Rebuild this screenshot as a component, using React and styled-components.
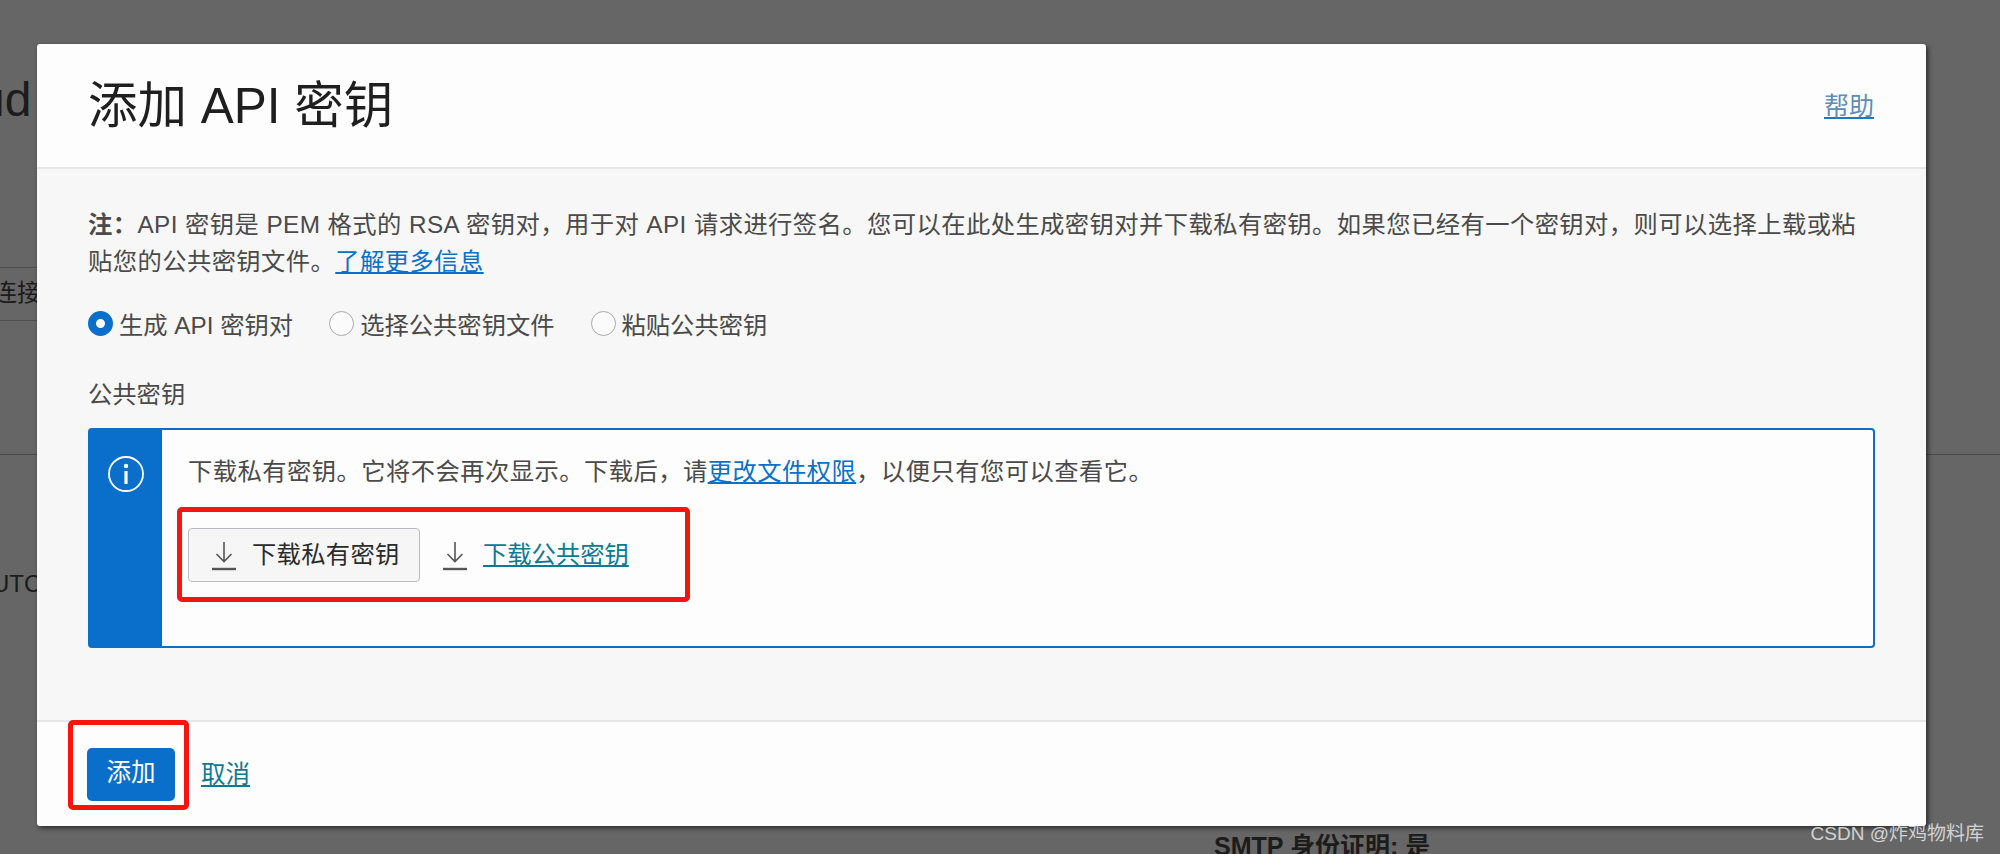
import React from 'react';
import styled, { createGlobalStyle } from 'styled-components';

const GlobalStyle = createGlobalStyle`
  html, body {
    margin: 0;
    padding: 0;
    height: 854px;
    overflow: hidden;
    background: #666666;
  }
  body {
    font-family: "Liberation Sans", "Noto Sans CJK SC", sans-serif;
  }
`;

const Page = styled.div`
  position: relative;
  width: 2000px;
  height: 854px;
  overflow: hidden;
  background: #666666;
  color: #1c1c1c;
`;

const Backdrop = styled.div`
  padding-top: 76px;
`;

const PageTitle = styled.div`
  font-size: 48px;
  line-height: 48px;
  height: 191px;
  margin-left: -22px;
`;

const ConnectRow = styled.div`
  height: 52px;
  border-top: 1px solid #4e4e4e;
  border-bottom: 1px solid #4e4e4e;
  font-size: 24px;
  line-height: 50px;
  width: 60px;
  text-indent: -7px;
  white-space: nowrap;
`;

const SectionRule = styled.div`
  height: 111px;
  margin-top: 133px;
  border-top: 1px solid #4a4a4a;
`;

const ZoneText = styled.div`
  font-size: 24px;
  line-height: 28px;
  margin-top: 4px;
  text-indent: -8px;
`;

const SmtpText = styled.div`
  font-size: 25px;
  line-height: 28px;
  font-weight: 700;
  margin-left: 1214px;
  margin-top: 234px;
  white-space: nowrap;
`;

const Dialog = styled.div`
  position: absolute;
  left: 37px;
  top: 44px;
  width: 1889px;
  height: 782px;
  display: flex;
  flex-direction: column;
  background: #fdfdfd;
  border-radius: 3px;
  box-shadow: 2px 2px 5px rgba(0, 0, 0, 0.6);
`;

const Header = styled.header`
  height: 125px;
  flex-shrink: 0;
  box-sizing: border-box;
  padding: 0 52px 0 51px;
  display: flex;
  align-items: center;
  justify-content: space-between;
  border-bottom: 2px solid #e6e6e6;
`;

const Title = styled.h1`
  margin: 0;
  font-size: 49.5px;
  font-weight: 400;
  color: #1f1f1f;
  line-height: 56px;
`;

const HelpLink = styled.a`
  margin-bottom: 3px;
  font-size: 25px;
  color: #5f8db5;
  text-decoration: underline;
  text-decoration-color: #1f78bd;
`;

const Body = styled.div`
  flex: 1;
  box-sizing: border-box;
  padding: 37px 51px 0;
  background: #f7f7f7;
  color: #4a4a4a;
  font-size: 24.3px;
`;

const Note = styled.p`
  margin: 0;
  max-width: 1785px;
  line-height: 37px;
  letter-spacing: 0.43px;
`;

const InlineLink = styled.a`
  color: #0a70c8;
  text-decoration: underline;
`;

const RadioRow = styled.div`
  display: flex;
  align-items: center;
  gap: 36px;
  margin-top: 25px;
  height: 36px;
`;

const RadioLabel = styled.label`
  display: flex;
  align-items: center;
  gap: 6px;
`;

const RadioDot = styled.span`
  box-sizing: border-box;
  width: 25px;
  height: 25px;
  border-radius: 50%;
  background: ${({ $checked }) => ($checked ? '#fff' : '#fbfbfb')};
  border: ${({ $checked }) => ($checked ? '8px solid #0a6fcb' : '1.5px solid #a9a9a9')};
`;

const FieldLabel = styled.div`
  margin-top: 36px;
  line-height: 36px;
`;

const InfoBox = styled.div`
  display: flex;
  box-sizing: border-box;
  margin-top: 15px;
  height: 220px;
  background: #fdfdfd;
  border: 2px solid #0a6fcb;
  border-radius: 4px;
`;

const InfoStripe = styled.div`
  width: 72px;
  flex-shrink: 0;
  display: flex;
  justify-content: center;
  padding-top: 25px;
  background: #0a6fcb;
  color: #fff;
`;

const InfoContent = styled.div`
  padding: 24px 0 0 26px;
`;

const InfoText = styled.div`
  line-height: 36px;
  letter-spacing: 0.45px;
`;

const Actions = styled.div`
  position: relative;
  display: flex;
  align-items: center;
  gap: 22px;
  margin-top: 38px;
  height: 54px;
`;

const Annotation = styled.span`
  position: absolute;
  box-sizing: border-box;
  border: 5px solid #f5150c;
  border-radius: 5px;
  pointer-events: none;
`;

const ActionsMark = styled(Annotation)`
  left: -11px;
  top: -21px;
  width: 513px;
  height: 95px;
`;

const GhostButton = styled.button`
  box-sizing: border-box;
  display: flex;
  align-items: center;
  gap: 15px;
  width: 232px;
  height: 54px;
  padding: 0 0 0 22px;
  font: inherit;
  letter-spacing: 0.3px;
  color: #2b2b2b;
  background: #f6f6f7;
  border: 1.5px solid #b9bcc2;
  border-radius: 4px;
`;

const ActionLabel = styled.span`
  margin-bottom: 6px;
`;

const LinkAction = styled.span`
  display: flex;
  align-items: center;
  gap: 15px;
`;

const TealLink = styled.a`
  color: #0b7a94;
  text-decoration: underline;
`;

const CancelLink = styled(TealLink)`
  margin-bottom: 3px;
`;

const Footer = styled.footer`
  position: relative;
  height: 106px;
  flex-shrink: 0;
  box-sizing: border-box;
  padding: 0 0 0 50px;
  display: flex;
  align-items: center;
  gap: 26px;
  border-top: 2px solid #e6e6e6;
  font-size: 24.5px;
`;

const PrimaryButton = styled.button`
  position: relative;
  width: 88px;
  height: 53px;
  margin-top: 1px;
  padding: 0 0 8px;
  font: inherit;
  color: #fff;
  background: #0a6fcb;
  border: 0;
  border-radius: 5px;
`;

const AddMark = styled(Annotation)`
  left: -19px;
  top: -28px;
  width: 121px;
  height: 90px;
`;

const Watermark = styled.div`
  position: absolute;
  right: 16px;
  bottom: 9px;
  font-size: 19px;
  color: rgba(255, 255, 255, 0.72);
  white-space: nowrap;
`;

const InfoIcon = () => (
  <svg width="38" height="38" viewBox="0 0 38 38" fill="none" stroke="currentColor">
    <circle cx="19" cy="19" r="17" strokeWidth="1.8" />
    <circle cx="19" cy="11" r="2.2" fill="currentColor" stroke="none" />
    <path d="M19 16v13" strokeWidth="3.2" />
  </svg>
);

const DownloadIcon = () => (
  <svg width="26" height="32" viewBox="0 0 26 32" fill="none" stroke="#555555" strokeWidth="1.6">
    <path d="M13 3v19M5.500 15l7.500 7.500 7.500-7.500" />
    <path d="M1 30h24" strokeWidth="2.4" />
  </svg>
);

export default function App() {
  return (
    <>
      <GlobalStyle />
      <Page>
        <Backdrop>
          <PageTitle>ud</PageTitle>
          <ConnectRow>连接</ConnectRow>
          <SectionRule />
          <ZoneText>UTC</ZoneText>
          <SmtpText>SMTP 身份证明: 是</SmtpText>
        </Backdrop>

        <Dialog>
          <Header>
            <Title>添加 API 密钥</Title>
            <HelpLink>帮助</HelpLink>
          </Header>
          <Body>
            <Note>
              <strong>注：</strong>API 密钥是 PEM 格式的 RSA 密钥对，用于对 API 请求进行签名。您可以在此处生成密钥对并下载私有密钥。如果您已经有一个密钥对，则可以选择上载或粘贴您的公共密钥文件。
              <InlineLink>了解更多信息</InlineLink>
            </Note>
            <RadioRow>
              <RadioLabel><RadioDot $checked />生成 API 密钥对</RadioLabel>
              <RadioLabel><RadioDot />选择公共密钥文件</RadioLabel>
              <RadioLabel><RadioDot />粘贴公共密钥</RadioLabel>
            </RadioRow>
            <FieldLabel>公共密钥</FieldLabel>
            <InfoBox>
              <InfoStripe><InfoIcon /></InfoStripe>
              <InfoContent>
                <InfoText>
                  下载私有密钥。它将不会再次显示。下载后，请<InlineLink>更改文件权限</InlineLink>，以便只有您可以查看它。
                </InfoText>
                <Actions>
                  <ActionsMark />
                  <GhostButton><DownloadIcon /><ActionLabel>下载私有密钥</ActionLabel></GhostButton>
                  <LinkAction><DownloadIcon /><ActionLabel><TealLink>下载公共密钥</TealLink></ActionLabel></LinkAction>
                </Actions>
              </InfoContent>
            </InfoBox>
          </Body>
          <Footer>
            <PrimaryButton>添加<AddMark /></PrimaryButton>
            <CancelLink>取消</CancelLink>
          </Footer>
        </Dialog>

        <Watermark>CSDN @炸鸡物料库</Watermark>
      </Page>
    </>
  );
}
